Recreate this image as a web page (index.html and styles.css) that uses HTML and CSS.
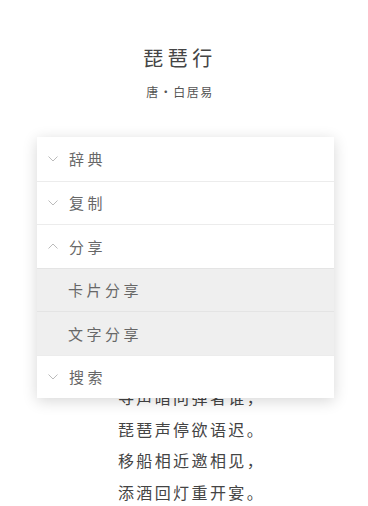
FILE: index.html
```html
<html>
<head>
    <title>琵琶行</title>
    <link rel="stylesheet" href="styles.css">
</head>
<body>
<div id="page">
    <h1 class="title">琵琶行</h1>
    <div class="author">唐·白居易</div>
    <div class="poem">
        <p>浔阳江头夜送客，</p>
        <p>枫叶荻花秋瑟瑟。</p>
        <p>主人下马客在船，</p>
        <p>举酒欲饮无管弦。</p>
        <p>醉不成欢惨将别，</p>
        <p>别时茫茫江浸月。</p>
        <p>忽闻水上琵琶声，</p>
        <p>主人忘归客不发。</p>
        <p>寻声暗问弹者谁，</p>
        <p>琵琶声停欲语迟。</p>
        <p>移船相近邀相见，</p>
        <p>添酒回灯重开宴。</p>
    </div>
</div>

<!-- popup menu over the poem -->
<div id="menu">
    <div class="item"><svg class="arrow" width="10" height="6" viewBox="0 0 10 6"><polyline points="0.5,0.5 5,5 9.5,0.5"/></svg><span>辞典</span></div>
    <div class="item"><svg class="arrow" width="10" height="6" viewBox="0 0 10 6"><polyline points="0.5,0.5 5,5 9.5,0.5"/></svg><span>复制</span></div>
    <div class="item"><svg class="arrow" width="10" height="6" viewBox="0 0 10 6"><polyline points="0.5,5.5 5,1 9.5,5.5"/></svg><span>分享</span></div>
    <div class="item sub"><span>卡片分享</span></div>
    <div class="item sub"><span>文字分享</span></div>
    <div class="item"><svg class="arrow" width="10" height="6" viewBox="0 0 10 6"><polyline points="0.5,0.5 5,5 9.5,0.5"/></svg><span>搜索</span></div>
</div>
</body>
</html>
```

FILE: styles.css
```css
body {
    margin: 0;
    background: #fff;
    font-family: "Noto Sans CJK SC", "Noto Sans", sans-serif;
    overflow: hidden;
}
#page {
    text-align: center;
    padding-top: 46px;
}
.title {
    margin: 0;
    font-size: 20px;
    font-weight: normal;
    line-height: 24px;
    letter-spacing: 4.5px;
    padding-left: 4px;
    margin-right: 12px;
    color: #454545;
}
.author {
    margin-top: 14px;
    font-size: 12px;
    line-height: 16px;
    letter-spacing: 1.5px;
    padding-left: 2px;
    margin-right: 10px;
    color: #555;
}
.poem {
    margin-top: 29.4px;
    padding-left: 15px;
}
.poem p {
    margin: 0;
    font-size: 16px;
    line-height: 31.6px;
    letter-spacing: 2.4px;
    color: #444;
}
#menu {
    position: absolute;
    left: 37px;
    top: 137px;
    width: 297px;
    background: #fff;
    box-shadow: 0 3px 14px rgba(0, 0, 0, 0.16);
}
.item {
    display: flex;
    align-items: center;
    height: 43.5px;
    padding-left: 11px;
    border-top: 1px solid #ececec;
    box-sizing: border-box;
    font-size: 15px;
    letter-spacing: 3.5px;
    color: #676767;
}
.item:first-child {
    border-top: none;
}
.item.sub {
    background: #efefef;
    padding-left: 31px;
    border-top-color: #e4e4e4;
}
.arrow {
    margin-right: 11px;
}
.arrow polyline {
    fill: none;
    stroke: #bbb;
    stroke-width: 1;
}
```
